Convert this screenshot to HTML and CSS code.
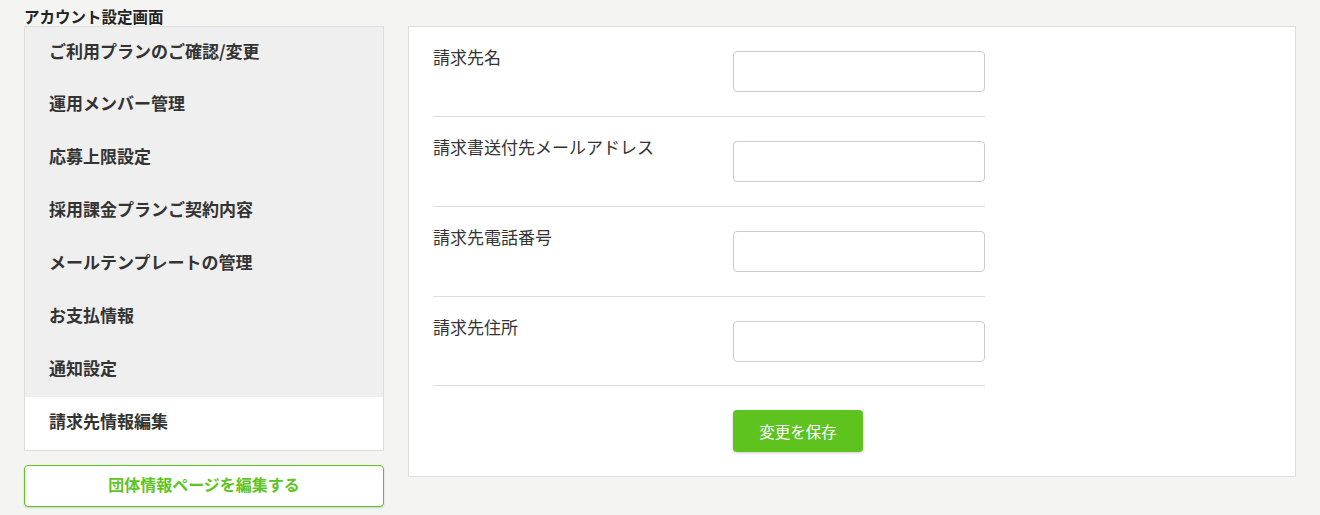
FILE: index.html
```html
<!DOCTYPE html>
<html lang="ja">
<head>
  <meta charset="UTF-8" />
  <meta name="viewport" content="width=device-width, initial-scale=1.0" />
  <title>アカウント設定画面</title>
  <link rel="stylesheet" href="styles.css">
</head>
<body>
  <h1 class="page-title">アカウント設定画面</h1>

  <div class="layout">
    <div class="side">
      <ul class="side-menu">
        <li><a href="#">ご利用プランのご確認/変更</a></li>
        <li><a href="#">運用メンバー管理</a></li>
        <li><a href="#">応募上限設定</a></li>
        <li><a href="#">採用課金プランご契約内容</a></li>
        <li><a href="#">メールテンプレートの管理</a></li>
        <li><a href="#">お支払情報</a></li>
        <li><a href="#">通知設定</a></li>
        <li class="active"><a href="#">請求先情報編集</a></li>
      </ul>
      <a href="#" class="btn-outline">団体情報ページを編集する</a>
    </div>

    <div class="panel">
      <form class="billing-form">
        <div class="form-row">
          <label for="name">請求先名</label>
          <input type="text" id="name">
        </div>
        <div class="form-row">
          <label for="mail">請求書送付先メールアドレス</label>
          <input type="text" id="mail">
        </div>
        <div class="form-row">
          <label for="tel">請求先電話番号</label>
          <input type="text" id="tel">
        </div>
        <div class="form-row">
          <label for="address">請求先住所</label>
          <input type="text" id="address">
        </div>
        <div class="form-actions">
          <button type="button" class="btn-save">変更を保存</button>
        </div>
      </form>
    </div>
  </div>
</body>
</html>
```

FILE: styles.css
```css
body {
  margin: 0;
  padding: 6px 24px 8px;
  background: #f4f4f2;
  color: #333;
  font-family: Meiryo, "Noto Sans CJK JP", "Noto Sans", sans-serif;
}
.page-title {
  margin: 0;
  font-size: 15.5px;
  font-weight: bold;
  line-height: 20px;
  color: #222;
}
.layout {
  display: flex;
  align-items: flex-start;
  gap: 24px;
}
.side {
  width: 360px;
  flex-shrink: 0;
}
.side-menu {
  list-style: none;
  margin: 0;
  padding: 0;
  border: 1px solid #ddd;
  background: #efefef;
}
.side-menu li a {
  display: block;
  height: 53px;
  line-height: 47px;
  padding-left: 24px;
  font-size: 17px;
  font-weight: bold;
  color: #333;
  text-decoration: none;
}
.side-menu li:first-child a {
  height: 52px;
}
.side-menu li.active {
  background: #fff;
}
.btn-outline {
  display: block;
  margin-top: 14px;
  height: 40px;
  line-height: 37px;
  border: 1px solid #5ec41e;
  border-radius: 4px;
  background: #fff;
  box-shadow: 0 1px 2px rgba(0, 0, 0, 0.15);
  text-align: center;
  font-size: 16px;
  font-weight: bold;
  color: #5ec41e;
  text-decoration: none;
}
.panel {
  flex: 1;
  background: #fff;
  border: 1px solid #ddd;
  padding: 24px;
}
.billing-form {
  width: 552px;
}
.form-row {
  display: flex;
  justify-content: space-between;
  align-items: flex-start;
  padding: 0 0 24px;
  margin-bottom: 24px;
  border-bottom: 1px solid #ddd;
}
.form-row:nth-child(4) {
  padding-bottom: 23px;
}
.form-row label {
  font-size: 17px;
  line-height: 20px;
  color: #333;
  margin-top: -4px;
}
.form-row input {
  box-sizing: border-box;
  width: 252px;
  height: 41px;
  border: 1px solid #ccc;
  border-radius: 4px;
  padding: 0 10px;
  font-size: 15px;
}
.form-actions {
  padding-left: 300px;
}
.btn-save {
  width: 130px;
  height: 42px;
  border: none;
  border-radius: 4px;
  background: #5ec21f;
  box-shadow: 0 1px 3px rgba(0, 0, 0, 0.2);
  color: #fff;
  font-family: inherit;
  font-size: 15.5px;
  cursor: pointer;
}
```
